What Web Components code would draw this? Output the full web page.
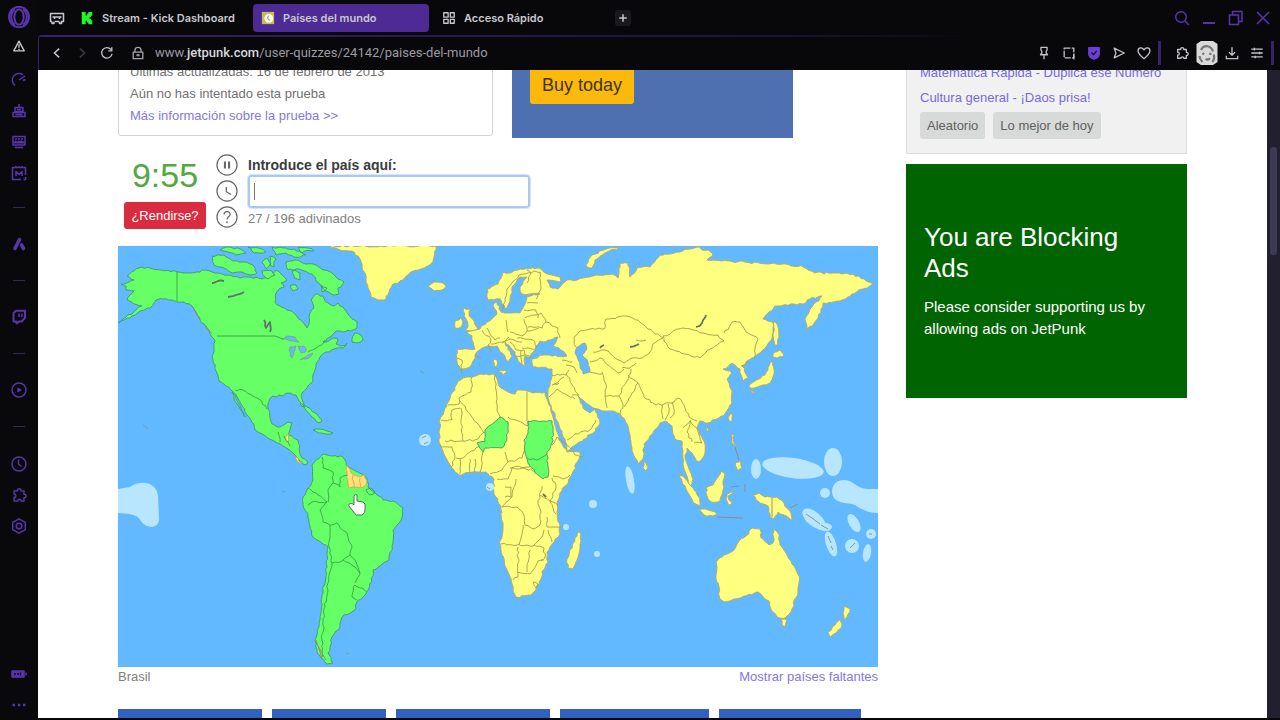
<!DOCTYPE html>
<html lang="es">
<head>
<meta charset="utf-8">
<title>Países del mundo</title>
<style>
body
{
	margin      : 0;
	background  : #08080b;
	font-family : "Liberation Sans", Arial, sans-serif;
}
</style>
</head>
<body>
<gx-window></gx-window>

<script>
const ICONS = {
	opera    : `<ellipse cx="8" cy="8" rx="7.2" ry="7.4"/><ellipse cx="8" cy="8" rx="3.4" ry="5.6"/><path d="M5 2.500C1.500 5 1.500 11 5 13.500M11 2.500c3.500 2.500 3.500 8.500 0 11"/>`,
	warning  : `<path d="M8 2.500L14 13.500H2zM8 6v4M8 11v1.500"/>`,
	speed    : `<path d="M4 13.500A6.500 6.500 0 1 1 12 2.800M8 8l6-4M12 8.500l2.500-1"/>`,
	bot      : `<path d="M8 1v3M4 4.500h8v4H4zM2 9.500h12v4H2zM4.500 11.500h7M6 6.500h4"/>`,
	screen   : `<path d="M2 2.500h12v8.500H2zM4 5h2M7 5h2M10 5h2M4 7.500h1.500M7 7.500h5M4 13.500h8"/><path d="M2.500 8.500h11" stroke-width="2"/>`,
	market   : `<path d="M10 14.500H1.500V2.500h13V10M5 1v2M8 1v2M11 1v2M5 11V6.500L8 9.500l3-3V11M14.500 12v2.500h-2"/>`,
	apps     : `<path d="M4 12.500L8.500 3.500" stroke-width="3.600" stroke-linecap="round"/><path d="M10.500 9l2 3.500" stroke-width="3.600" stroke-linecap="round"/>`,
	twitch   : `<path d="M2.500 4L5 1.800h9V9l-3.500 3.500H8L5.500 14.500v-2H2.500z" stroke-width="2"/><path d="M8 4.500V8M11 4.500V8"/>`,
	player   : `<circle cx="8" cy="8" r="7"/><path d="M7 6.500l2.500 1.500L7 9.500z" fill="currentColor"/>`,
	clock    : `<circle cx="8" cy="8" r="7"/><path d="M7.500 3.800V8l3 2.500"/>`,
	puzzle   : `<path d="M3 4h3.500c-.5-3 4-3 3.500 0h3v3.300c2.800-.3 2.800 3.700 0 3.400V14H10c.3-2.200-3.500-2.200-3.200 0H3v-3.500c2.500 0 2.500-3.500 0-3.500z"/>`,
	settings : `<path d="M8 .8l6.300 3.600v7.200L8 15.200l-6.300-3.600V4.400z"/><circle cx="8" cy="8" r="2.800"/>`,
	battery  : `<path d="M1 5h12v6H1z" fill="currentColor"/><path d="M15 6.500v3"/><path d="M4 7v2M7 7v2M9.500 6.500v3" stroke="#0a0a0c"/>`,
	dots     : `<path d="M1.500 8h2.500M6.800 8h2.500M12 8h2.500" stroke-width="2.500"/>`,
	kick     : `<path d="M2 1h4.500v4H8V3h1.500V1H14v4.500h-1.500V7H11v2h1.500v1.500H14V15H9.500v-2H8v-2H6.500v4H2z" fill="#23f52c" stroke="none"/>`,
	jetpunk  : `<path d="M1 1h14v14H1z" fill="#c8bd55" stroke="none"/><circle cx="9" cy="8.500" r="5" fill="#fff" stroke="none"/><path d="M9 5.500c-2.500 2-1.500 5 1.500 5" stroke="#b8a84a"/>`,
	dial     : `<path d="M2 2h5v5H2zM9.500 2h4.500v5H9.500zM2 9.500h5V14H2zM9.500 9.500H14V14H9.500z"/>`,
	island   : `<path d="M3 11.500H1.500v-8h13v8H12M3 11.500v2h2v-2M10.500 11.500v2h2v-2M6 11.500h4M5.500 7v2M10.500 7v2M3.500 7h9"/>`,
	plus     : `<path d="M8 3v10M3 8h10" stroke-width="2"/>`,
	search   : `<circle cx="7" cy="7" r="5.300"/><path d="M11 11l3.800 4"/>`,
	minimize : `<path d="M2 13h12" stroke-width="2"/>`,
	restore  : `<path d="M1.500 5h9v9.500h-9zM4.500 5V1.500H14v10h-3.500"/>`,
	close    : `<path d="M2 2l12 12M14 2L2 14"/>`,
	back     : `<path d="M10.500 3L5 8l5.500 5" stroke-width="1.800"/>`,
	forward  : `<path d="M5.500 3L11 8l-5.500 5" stroke-width="1.800"/>`,
	reload   : `<path d="M12.500 4A6 6 0 1 0 13.800 9M13.500 1.500v4h-4"/>`,
	lock     : `<path d="M2.500 7h11v7.500h-11zM4.500 7V5a3.500 3.500 0 0 1 7 0v2M8 9v3M6 10.500h4"/>`,
	pin      : `<path d="M4.500 1.500h7v3l-1 1.500v2l1.500 2H4l1.500-2V6l-1-1.500zM8 10v5"/>`,
	snapshot : `<path d="M2.500 2.500h11v11h-11z" stroke-dasharray="7 1.500"/><path d="M13.500 10v5.500"/>`,
	shield   : `<path d="M2 2h12v7c0 3-3 5-6 6-3-1-6-3-6-6z" fill="#6b3fd6" stroke="#6b3fd6"/><path d="M5 7.500l2.500 2.500L11 5.500" stroke="#1b1035"/>`,
	send     : `<path d="M2.500 2.500L14 8 2.500 13.500 4.500 8z"/>`,
	heart    : `<path d="M8 14.500C3 10.500 1.200 8 1.200 5.500c0-4 5-4.500 6.800-1 1.800-3.500 6.800-3 6.800 1 0 2.500-1.800 5-6.800 9z"/>`,
	download : `<path d="M8 1.500V10M4.500 7L8 10.500 11.500 7M1.500 11v3.500h13V11"/>`,
	sliders  : `<path d="M1.500 3.500h13M1.500 8h13M1.500 12.500h13M5 2v3M11 6.500v3M6 11v3"/>`,
	pause    : `<circle cx="8" cy="8" r="7.300"/><path d="M6.500 5.500v5M9.500 5.500v5" stroke-width="1.500"/>`,
	timer    : `<circle cx="8" cy="8" r="7.300"/><path d="M7.500 5v3.500l3.500 2"/>`,
	help     : `<circle cx="8" cy="8" r="7.300"/><path d="M5.800 6.200c.2-3 4.700-2.700 4.500 0C10.200 7.700 8 7.800 8 9.800M8 11v1.500"/>`,
	avatar   : `<path d="M1 2l3-2h8l3 2v12l-3 2H4l-3-2z" fill="#dadada" stroke="none"/><path d="M4 6c2-4 7-3 8 1M5 8l1 1M9.500 8.500h1.500M7 12c1 .5 2 .5 3-.5M3 10c0 2 1 3 2 4M12.500 9c.5 2 0 4-1 5" stroke="#777"/>`
};

class GxIcon extends HTMLElement
{
	constructor ()
	{
		super();
		this.attachShadow ({mode:"open"});
	}

	connectedCallback ()
	{
		this.shadowRoot.innerHTML = `
			<style>
			:host
			{
				display : inline-block;
				flex    : none;
				width   : var(--icon-size, 16px);
				height  : var(--icon-size, 16px);
			}
			svg
			{
				display        : block;
				width          : 100%;
				height         : 100%;
				fill           : none;
				stroke         : currentColor;
				stroke-width   : var(--icon-stroke, 1.5);
				stroke-linejoin: round;
			}
			</style>
			<svg viewBox="0 0 16 16" aria-hidden="true">${ICONS[this.getAttribute("name")]}</svg>
		`;
	}
}

class GxSidebar extends HTMLElement
{
	constructor ()
	{
		super();
		this.attachShadow ({mode:"open"});

		let item = (name, label) =>
			`<button aria-label="${label}"><gx-icon name="${name}"></gx-icon></button>`;

		this.shadowRoot.innerHTML = `
			<style>
			:host
			{
				display        : flex;
				flex-direction : column;
				color          : #5635ad;
				background     : #09090c;
			}
			button
			{
				display         : flex;
				align-items     : center;
				justify-content : center;
				width           : 100%;
				height          : 31px;
				padding         : 0;
				border          : 0;
				color           : inherit;
				background      : none;
			}
			.logo
			{
				height      : 34px;
				--icon-size : 22px;
			}
			.warning
			{
				height        : 24px;
				margin-bottom : 6px;
				color         : #ccc;
				--icon-size   : 14px;
			}
			.solo
			{
				height : 34px;
			}
			hr
			{
				width      : 12px;
				height     : 1px;
				margin     : 19px auto;
				border     : 0;
				background : #342a52;
			}
			.tools
			{
				padding-top : 2px;
			}
			.end
			{
				margin-top : auto;
			}
			</style>
			<button class="logo" aria-label="Opera"><gx-icon name="opera"></gx-icon></button>
			<button class="warning" aria-label="Avisos"><gx-icon name="warning"></gx-icon></button>
			${item("speed", "GX Control")}
			${item("bot", "Aria")}
			${item("screen", "Mods")}
			${item("market", "Mercado")}
			<hr>
			<button class="solo" aria-label="Aplicaciones"><gx-icon name="apps"></gx-icon></button>
			<hr>
			<button class="solo" aria-label="Twitch"><gx-icon name="twitch"></gx-icon></button>
			<hr>
			<button class="solo" aria-label="Reproductor"><gx-icon name="player"></gx-icon></button>
			<hr>
			<div class="tools">
				${item("clock", "Historial")}
				${item("puzzle", "Extensiones")}
				${item("settings", "Ajustes")}
			</div>
			<div class="end">
				${item("battery", "Batería")}
				${item("dots", "Más")}
			</div>
		`;
	}
}

class GxTab extends HTMLElement
{
	constructor ()
	{
		super();
		this.attachShadow ({mode:"open"});
	}

	connectedCallback ()
	{
		this.shadowRoot.innerHTML = `
			<style>
			:host
			{
				display : block;
				flex    : 0 1 176px;
			}
			button
			{
				display       : flex;
				align-items   : center;
				gap           : 8px;
				width         : 100%;
				height        : 28px;
				padding       : 0 8px;
				border        : 0;
				border-radius : 4px;
				color         : inherit;
				background    : none;
				font          : inherit;
				white-space   : nowrap;
				--icon-size   : 14px;
			}
			:host([active]) button
			{
				background : #4d2a94;
			}
			</style>
			<button><gx-icon name="${this.getAttribute("icon")}"></gx-icon><slot></slot></button>
		`;
	}
}

class GxTabbar extends HTMLElement
{
	constructor ()
	{
		super();
		this.attachShadow ({mode:"open"});
		this.shadowRoot.innerHTML = `
			<style>
			:host
			{
				display     : flex;
				align-items : center;
				gap         : 5px;
				height      : 35px;
				color       : #c9c7ce;
				font        : 600 11px/16px Inter, sans-serif;
			}
			button
			{
				display         : flex;
				align-items     : center;
				justify-content : center;
				width           : 16px;
				height          : 16px;
				padding         : 0;
				border          : 0;
				color           : inherit;
				background      : none;
			}
			.island
			{
				width  : 29px;
				margin-left : 4px;
				margin-right : -4px;
			}
			.new
			{
				border-radius : 3px;
				background    : #1a1a1e;
				--icon-size   : 12px;
			}
			.controls
			{
				display     : flex;
				gap         : 11px;
				margin-left : auto;
				padding-right : 9px;
				color       : #5635ad;
			}
			</style>
			<button class="island" aria-label="Espacio"><gx-icon name="island"></gx-icon></button>
			<slot></slot>
			<button class="new" aria-label="Nueva pestaña"><gx-icon name="plus"></gx-icon></button>
			<div class="controls">
				<button aria-label="Buscar"><gx-icon name="search"></gx-icon></button>
				<button aria-label="Minimizar"><gx-icon name="minimize"></gx-icon></button>
				<button aria-label="Restaurar"><gx-icon name="restore"></gx-icon></button>
				<button aria-label="Cerrar"><gx-icon name="close"></gx-icon></button>
			</div>
		`;
	}
}

class GxAddress extends HTMLElement
{
	constructor ()
	{
		super();
		this.attachShadow ({mode:"open"});

		let item = (name, label) =>
			`<button class="${name}" aria-label="${label}"><gx-icon name="${name}"></gx-icon></button>`;

		this.shadowRoot.innerHTML = `
			<style>
			:host
			{
				display     : flex;
				align-items : center;
				height      : 35px;
				box-sizing  : border-box;
				border-left : 1px solid #38216d;
				border-top-left-radius : 4px;
				background  : linear-gradient(90deg, #38216d, #1c1433 60%, transparent 75%) top / 100% 2px no-repeat;
				color       : #c4c2c9;
				font        : 13px/20px Roboto, sans-serif;
			}
			button
			{
				display         : flex;
				align-items     : center;
				justify-content : center;
				width           : 25px;
				height          : 24px;
				padding         : 0;
				border          : 0;
				color           : inherit;
				background      : none;
				--icon-size     : 14px;
			}
			.nav
			{
				display      : flex;
				padding-left : 5px;
			}
			.forward
			{
				color : #3c3b41;
			}
			.lock
			{
				margin-left : 6px;
				color       : #a5a3aa;
			}
			.avatar
			{
				--icon-size : 24px;
			}
			.url
			{
				flex        : 1;
				margin-left : 5px;
				color       : #9c9aa3;
			}
			.url b
			{
				color       : #d8d6dd;
				font-weight : 500;
			}
			.tools
			{
				display      : flex;
				align-items  : center;
				padding-right: 2px;
			}
			.tools i
			{
				width      : 3px;
				height     : 24px;
				background : #38216d;
				margin     : 0 8px 0 2px;
			}
			.tools i:last-child
			{
				margin : 0 4px 0 2px;
			}
			</style>
			<div class="nav">
				${item("back", "Atrás")}
				${item("forward", "Adelante")}
				${item("reload", "Recargar")}
				${item("lock", "Seguridad")}
			</div>
			<span class="url">www.<b>jetpunk.com</b>/user-quizzes/24142/paises-del-mundo</span>
			<div class="tools">
				${item("pin", "Fijar")}
				${item("snapshot", "Captura")}
				${item("shield", "Bloqueador")}
				${item("send", "Flow")}
				${item("heart", "Favoritos")}
				<i></i>
				${item("puzzle", "Extensiones")}
				${item("avatar", "Perfil")}
				${item("download", "Descargas")}
				${item("sliders", "Configuración")}
				<i></i>
			</div>
		`;
	}
}

class QuizInfo extends HTMLElement
{
	constructor ()
	{
		super();
		this.attachShadow ({mode:"open"});
		this.shadowRoot.innerHTML = `
			<style>
			:host
			{
				display : grid;
				grid-template-columns : 375px 281px;
				gap     : 19px;
			}
			section
			{
				align-self    : start;
				padding       : 8px 11px;
				border        : 1px solid #d4d4d4;
				border-radius : 3px;
				color         : #707070;
				font-size     : 13px;
				line-height   : 22px;
			}
			p
			{
				margin : 0;
			}
			a
			{
				color           : #8478e2;
				text-decoration : none;
			}
			aside
			{
				padding    : 14px 18px 34px;
				background : #4e6fb0;
			}
			button
			{
				height        : 38px;
				padding       : 0 12px;
				border        : 0;
				border-radius : 3px;
				color         : #40351c;
				background    : #fdb90b;
				font          : 18px/38px "Liberation Sans", Arial, sans-serif;
			}
			</style>
			<section>
				<p>Últimas actualizadas: 16 de febrero de 2013</p>
				<p>Aún no has intentado esta prueba</p>
				<p><a href="#info">Más información sobre la prueba &gt;&gt;</a></p>
			</section>
			<aside><button>Buy today</button></aside>
		`;
	}
}

class QuizControls extends HTMLElement
{
	constructor ()
	{
		super();
		this.attachShadow ({mode:"open"});
		this.shadowRoot.innerHTML = `
			<style>
			:host
			{
				display   : flex;
				color     : #808080;
				font-size : 13px;
			}
			.clock
			{
				display        : flex;
				flex-direction : column;
				align-items    : center;
				width          : 94px;
			}
			time
			{
				color       : #55a743;
				font-size   : 34px;
				line-height : 40px;
			}
			button
			{
				padding    : 0;
				border     : 0;
				background : none;
				color      : #666;
				font       : inherit;
			}
			.giveup
			{
				height        : 27px;
				margin-top    : 7px;
				padding       : 0 7px;
				border-radius : 3px;
				color         : #fff;
				background    : #d92c40;
			}
			.options
			{
				display        : flex;
				flex-direction : column;
				gap            : 4px;
				margin         : -1px 10px 0 4px;
				--icon-size    : 22px;
				--icon-stroke  : 0.9;
			}
			.options button
			{
				height : 22px;
			}
			.answer
			{
				display        : flex;
				flex-direction : column;
			}
			label
			{
				color       : #3c3c3c;
				font-weight : bold;
				font-size   : 14px;
				line-height : 20px;
			}
			input
			{
				box-sizing    : border-box;
				width         : 282px;
				height        : 33px;
				padding       : 4px 6px;
				border        : 2px solid #a9c9f2;
				border-radius : 3px;
				outline       : 1px solid #d6e6fa;
				background    : linear-gradient(#777, #777) 4px center / 1px 17px no-repeat #fff;
				font          : 16px "Liberation Sans", Arial, sans-serif;
			}
			.count
			{
				line-height : 22px;
			}
			</style>
			<div class="clock">
				<time>9:55</time>
				<button class="giveup">¿Rendirse?</button>
			</div>
			<div class="options">
				<button aria-label="Pausa"><gx-icon name="pause"></gx-icon></button>
				<button aria-label="Tiempo"><gx-icon name="timer"></gx-icon></button>
				<button aria-label="Ayuda"><gx-icon name="help"></gx-icon></button>
			</div>
			<div class="answer">
				<label for="guess">Introduce el país aquí:</label>
				<input id="guess" type="text" autocomplete="off">
				<span class="count">27 / 196 adivinados</span>
			</div>
		`;
	}
}

class QuizMap extends HTMLElement
{
	constructor ()
	{
		super();
		this.attachShadow ({mode:"open"});
		this.shadowRoot.innerHTML = `
			<style>
			:host
			{
				display : block;
			}
			svg
			{
				display    : block;
				width      : 100%;
				background : #63b9ff;
			}
			path    { stroke-linejoin : round; }
			.land   { fill : #ffff80; stroke : #b0a868; stroke-width : 0.9; }
			.found  { fill : #66ff66; stroke : #3f9a6a; stroke-width : 0.9; }
			.guess  { fill : #ffe27a; stroke : #e0a050; stroke-width : 0.9; }
			.sea    { fill : #63b9ff; stroke : #8a9a78; stroke-width : 0.7; }
			.lines  { fill : none; stroke : #a39b4e; stroke-width : 0.9; }
			.green  { fill : none; stroke : #35a545; stroke-width : 0.9; }
			.lake   { fill : none; stroke : #5a7468; stroke-width : 1.8; }
			.zone   { fill : #b9e6ff; }
			.reef   { fill : none; stroke : #7d98a0; stroke-width : 1; }
			</style>
			<svg viewBox="118 246 760 421" role="img" aria-label="Mapa del mundo">
				<g id="terrain">
					<!-- north america -->
					<g class="found">
						<path d="M142 267l19 3 16 2 13 1 15-3 10 3 13 2 12 3 10-1 12 2 10-3 4-6 5 4 6 6-6 3 3 4-5 2-3 4-1 9 5 4 7 4 8 4 6 6 6 8 2-4v-7l5-9-3-8 4-6 8 2 5 7 6 3 4-3 5 4 5 7 9 8v6l-7 3h-14l-6 6-7 5h4l6-4 5 1-2 5 5 2 6-3-4 5-9 1-8 3-6 5-4 7-1 6-2 5v6l-6 7-5 5v6l2 8-3-1-3-7-2-4-6-2-7 3h-10l-4 5-1 8 2 9 2 6 7 3 6-3 3-2 4 1-2 7-1 5L298 440 299 450 302 458 308 462 306 465 299 460 293 453 288 449 280 444 272 440 264 435 255 430 254 424 247 415 241 404 236 395 231 390 226 386 219 381 216 371 213 360 214 348 215 341 212 337 207 329 200 320 196 312 192 306 184 302 177 302 171 300 163 299 156 300 150 308 140 311 132 316 124 320 118 323 126 317 136 310 142 306 134 304 127 300 130 295 134 291 126 290 126 286 121 284 129 282 134 280 127 276 134 271z"/>
						<path d="M212 256l12-1 9 6 10 1 10 3 4 8-7 2-8-3-10 1-8-5-10-3zM220 250l8-3 12 2 6 4-10 2-8-3zM248 247l14 2 4 3-12 1zM262 262l5-4 4 6-5 5zM270 256l6 3-2 8-4-2zM262 271h10l3 4-8 4zM272 247l14 1 14 3 6 4-12 2-8-4-10 2zM286 262l12-2 8 4 10 1 8 5 8 3 6 6 6 3-3 5-3 1 1 6-6 1-7-4-4-5-6-5-4-7-8-3-8-2-8 1zM293 270l7 3v7l-6-2zM290 286l6-1 2 4-5 2zM298 247l10 1 6 3-14 1zM321 285l6 3-5 4z"/>
						<path d="M352 339l3-6 6 2 2 5-5 3-6-1zM302 404l5 3 8 6 7 8-3 2-7-6-7-8zM313 430l7-1 7 2 6 2-7 1-7-1zM232 392l7 12 6 13-5-8-6-10z"/>
					</g>
					<path class="sea" d="M282 339l7-3 6 1 4 5-7-1zM290 347l6-1-2 6-2 6-2-2zM298 346l6 0 3 4-6 3-2-4zM300 360l13-7-6 6z"/>
					<!-- south america -->
					<path class="found" d="M312 465L323 454 332 456 343 457 348 467 358 472 367 478 368 487 377 495 383 500 393 501 403 508 402 518 393 530 393 543 389 560 373 570 372 582 365 595 357 602 355 610 342 617 340 627 332 637 330 647 328 653 333 663 327 664 317 653 315 640 320 620 323 590 327 567 328 547 313 537 308 517 303 505 303 497 308 488 313 480z"/>
					<path class="land" d="M294 457l4 1 4 5-3 0zM286 436l3-2-1 8-3-1z"/>
					<path class="guess" d="M347 466l3 3 4 6 5 2 5-2 3 6-2 5-6 2-6-1-4 1-1-5-2-8z"/>
					<path class="guess" d="M353 475l1 12M360 478l0 10"/>
					<!-- greenland, iceland -->
					<path class="land" d="M330 246l10 4 12 1 8 8 2 8 3 6 1 9 3 8 2 7 7 3 8-1 3-7 3-7 11-5 8-8 10-3 10-5 3-7 2-11zM428 286l6-4 9 1 3 3-4 4-8 1z"/>
					<!-- eurasia -->
					<path class="land" d="M510 273l10-4 18-1 7 5 15 4v5l-13-2 3 7 8 2 9-9h10l16-4 19-2 6 4 2-15h8l2 14 7-9 13-1 10-12 17-3 20-5 16 6-6 7 38 2 22 2h16l20 3 12 6h18l20 1 20 10-6 4-15 6-12 7-17 2-5 15-11 12-2-11 5-10 12-13-12 3-7 5-28 2-12 13 10 4-1 15-12 15-8 5-10 8 6 12-5 3-3-12-8-6-9 6 9 4-5 6 5 12v12l-9 13-15 7-8-2-3 7 8 16-1 12-6 6-6-9-5-5-2 10 4 11 4 10-3 7-4-12-3-10v-13l-1-10-7-2-3-13-7-5-5 2-10 13-6 8-1 15-5 5-6-13-4-25-8-12-7-3h-8l-12-3-15-12 5 12 7 5 5-4 5 14-7 10-26 18-2-12-8-18-7-17-2-6v-7l2-5 2-17-19-2-1-8 11-4 24 1-4-5-10-5 5-9-13 5-5-1-4 5-3 6-3 5-5-1v11l-7-6-3-9-10-10 7 15-4 5-3-6-8-10h-9l-10 5-5 10-3 6-10 2-3-7v-13h18l-3-13-5-4 13-3 7-7 10-8-4-8 4-4 4 10 19 1 5-9 2-7 13-3-18 0-2-7 7-10h-7l-8 10-2 14-5 8-5-10-12 1-1-11 11-5 5-12z"/>
					<path class="land" d="M464 308l6 1-1 7 5 5 2 5 2 3-8 2-5 0 3-4-1-6-3-5zM455 321l6-3 2 4-2 5-6 1zM586 265l6-10 14-6 13-1-12 4-12 8-3 8-5-1zM774 321l4 6 1 10-3 9-3-12zM775 352l5-2 4 5-7 3-4-1zM773 362l1 12-4 9-10 3-10 2 5 4-2 1-4-7 6-5 10-6 3-5 2-8zM731 412l1 5-2 5-2-4zM498 370l9 1-3 4zM494 359l3 1v6l-3 1zM559 383l-5 1zM705 427l4 2-2 3z"/>
					<path class="sea" d="M577 347l8-4 2 6-5 6 6 7 2 10-7 2-3-9-5-12z"/>
					<!-- africa -->
					<path class="land" d="M458 381l9-4h5l8-3 15 1 3 8 3 5 7 4 7 2 2-4 10 1 6 2 12-1 2 7 5 15 4 14 3 12 8 12 13 0-1 7-7 15-10 17-5 11v10l3 14v8l-6 8-7 10 1 10-6 9-1 8-5 10-5 6-15 2-3-6-2-12-6-13-5-22 3-18-2-20-7-12v-15l-8-7h-10l-17 3-8-8-7-13-5-12 1-23 7-15z"/>
					<path class="land" d="M577 536l2-5 2 4-1 12-3 13-4 9-5-1-1-9 3-9zM644 461l3 4-1 6-3-3z"/>
					<!-- south east asia, oceania -->
					<path class="land" d="M678 474l5 2 8 10 8 11 1 9-7-4-7-13zM699 510l7-1 11 5-4 2-9-1zM706 488l7-3 5-8 3-6 4 3-2 7v9l-3 11-9 1-4-6zM727 494l7-2-6 4 4 8-4 1-2-6zM731 434l3 1v8l3 4-5-4zM736 462l5-1 1 7-5 2zM752 495l7-2 6 4 12 0 7 6 5 7 3 10-8-5-6-3-4 7-4-2-2-11-8-3z"/>
					<path class="land" d="M716 562l8-7 9-4 6-10 7-5 6-8 8 1 1 9 8 7 4-2 1-14 4 4 2 12 6 8 6 11 7 12-1 16-7 20-6 6-8-1-6-8-2-8-4-2-7-7-14 4-10 3-10 3-4-3-1-12-3-12zM781 619l6 1-2 7-3-2zM844 606L850 609 847 617 844 620 843 613zM840 619L842 624 836 633 830 637 828 632 835 625z"/>
					<g class="lines">
						<!-- africa -->
						<path d="M495 375l1 15 1 21 3 6M448 405l11-1v-6l12-6 1-15M459 400l25 33 16-13M508 417l20 9 0-5M441 420h11v-10l8-2M461 408l2 33h-18M463 441l12-1 9-8M440 447l12 0 3 10-4 10M456 458l7 0 8-7 10-5M460 474v-15M470 473v-14M475 472v-13M480 472l4-21M505 452l3 10-6 8-12 4M508 462l14-4 4-9 0-11M510 468l22-2M497 479h11l4-11h10l20 4M502 507h15l6 6 2 12 9 4 6-4 1-13-3-8 4-18M501 544l32 2 8-8 3-8M523 525l-4 20M518 547v30l-5 3M518 572l12 2 8-13 6-1M530 550l-3 22M534 545l10 3 1 10-4 3M552 478l4 10-6 14 6 12M552 445l5-8 8 6 10 12 8 2M553 476l10 3 7-4M540 495l18 10M547 517v10l7 0 7 0M548 530l4 12M533 582l5 2-2 4zM505 487h6v10h-6M502 507l10-10 4-18"/>
						<!-- europe -->
						<path d="M503 311l4-22 12-14 15-4 6 2M527 283l4-10-4-3M540 272l1 16-5 11M506 320l2 12M524 319l3 12-5 5-12-4M527 303l11 0M524 310l12 0 2 8M525 318l7-3 9-2 5 9-4 6-14-1M546 322l12 6 2 10M527 331l12-3M487 328l8 12 5-2M482 330l9 10-3 5 3 7M491 344l12-2 6-5M502 343l8-4 12 3M510 342l6 8 8 0 1 5M517 338l16 2 4 8M522 348l14 1M515 356l10-1 6 3M457 358l5 2v14M475 355l6 3M521 351l1 12M562 360l10 2M566 365l8 2 3 6M552 375l14 0 3-5M566 374l7 12 6 10M552 385l12-8M549 397l8-8 10 6 8 4M567 440l8-6 15-4 6-10"/>
						<!-- asia -->
						<path d="M576 347l-2-10 6-6 10-2 14 0 2-10 20-3 12 4 10 9 12 7 3 2-10 6-3 8-8 6-10 0-8 5-12-8-7-5-12 2M663 336l20-8 10 2 10 3 15 2 6 6-14 8-10 9-15-4-15-5-6-8zM724 333l8-11 8 0 6 10 12 7-3 10 0 8M590 362l10-4 8 7 10 8 6-4M622 368l8 0 6-5M602 372l4 12-1 12 14 0 8-15 4-12M605 396l2 12M590 372l12 2M619 396l4 8-3 10M628 375l10 8-6 10-8 14M638 383l6 14 12 8 8-1 10-2 5-4 6 10 4 9 8 4M662 405l1 14M668 404l1 8-4 8M672 402l2 12-4 4M690 421l-3 11 5 10M690 421l8 10 4 12-8 0M683 428l8-8M572 395l6 0M636 340l10 0M741 366l8-4"/>
					</g>
					<path class="green" d="M235 390l8 0 10 6 6 3 8 10M278 432l2 10M284 436l6 10M322 457L323 468 333 472 333 483 340 487 340 478 348 475M333 483L328 490 328 502M308 488L318 495 327 502 312 502 308 505M327 502L320 510 323 522 330 525 329 547M330 525L337 523 347 533 352 547 350 555 343 560 332 563 329 547M343 560L355 567 360 573 355 583M350 555L355 560 360 573M332 563L328 583 325 607 322 640 323 657M355 585L367 592M355 585L352 597 357 600M366 490l4 5 5-3-4-4zM308 352l11-6 6-6"/>
					<path class="lake" d="M212 283l6-2 6 0M228 297l8-2 8-3M264 320l2 8 4-6 0 10M600 348l4-3M630 347l9-3M696 327l6-4 4-8M543 494l3 3"/>
					<g class="found">
						<path d="M485 430L500 417 508 422 507 438 502 448 485 448 483 452 477 443 485 442z"/>
						<path d="M528 421L552 421 553 432 552 443 547 452 548 467 548 477 543 479 535 473 528 463 525 452 524 440 528 433z"/>
					</g>
					<path class="green" d="M527 458L537 460 547 454"/>
				</g>
				<path class="green" d="M177 271v30M217 336h58l8 3"/>
				<path class="lines" d="M527 392v29"/>
				<path class="lines" d="M192 306l8 14M206 326l6 8M318 646l8 14M316 640l6 18M735 447l4 13M717 517l26 1M790 508l8-4M745 484v8M772 498v19M731 487l8-1" stroke="#9c826e" style="stroke:#9c826e"/>
				<!-- island groups -->
				<g class="zone">
					<path d="M118 489l12-2c12-8 26-4 28 8l1 24c0 11-14 9-18 2-4-8-14-7-23-8z"/>
					<circle cx="425" cy="440" r="6"/><circle cx="490" cy="487" r="4"/>
					<ellipse cx="630" cy="480" rx="4" ry="14" transform="rotate(-10 630 480)"/>
					<circle cx="593" cy="504" r="4"/><circle cx="566" cy="527" r="3"/><circle cx="597" cy="554" r="3"/>
					<ellipse cx="756" cy="469" rx="5" ry="10"/>
					<ellipse cx="793" cy="468" rx="31" ry="10" transform="rotate(8 793 468)"/>
					<ellipse cx="833" cy="462" rx="9" ry="14"/><circle cx="825" cy="493" r="5"/>
					<path d="M832 491c1-13 15-14 24-6 7 5 14 4 22 4v24c-9 0-16-3-23-8-7-3-23 0-23-14z"/>
					<ellipse cx="814" cy="519" rx="7" ry="14" transform="rotate(-50 814 519)"/>
					<ellipse cx="825" cy="527" rx="7" ry="4"/>
					<ellipse cx="831" cy="544" rx="5" ry="13" transform="rotate(-18 831 544)"/>
					<ellipse cx="854" cy="523" rx="5" ry="10" transform="rotate(-30 854 523)"/>
					<circle cx="852" cy="546" r="7"/><circle cx="871" cy="534" r="5"/>
					<ellipse cx="867" cy="553" rx="4" ry="9" transform="rotate(10 867 553)"/>
				</g>
				<path class="reef" d="M806 514l6 4M812 518l8 6M821 525l7 4M828 536l3 7M831 546l2 4M850 548l5-5M869 534h3M422 438l4-2M424 444l4-2M143 425l5 4M282 491l3 1M346 653l3 1M420 371l4 2M487 487l3 2"/>
				<!-- hand pointer -->
				<path d="M354 496c1-2 3-2 3 0v5l6 1 2 2v5c0 3-1 5-3 6h-6l-7-9c-1-2 2-4 5-1z" fill="#fff" stroke="#444" stroke-width="0.8"/>
			</svg>
		`;

		for (let path of this.shadowRoot.querySelectorAll("#terrain path")) {
			path.setAttribute("d", this._roughen(path.getAttribute("d")));
		}
	}

	// splits long segments and nudges the new points, so coasts and borders look less straight
	_roughen (d)
	{
		let seed = 7;
		let rand = () => (seed = (seed * 16807) % 2147483647) / 2147483647 - 0.5;
		let toks = d.match(/[a-z]|-?\d+/gi);
		let out  = [];
		let cmd  = "";
		let i = 0, x = 0, y = 0, sx = 0, sy = 0;

		let line = (nx, ny) => {
			let len   = Math.hypot(nx - x, ny - y);
			let parts = Math.max(1, Math.round(len / 3));
			for (let n = 1; n < parts; n++) {
				let px = x + (nx - x) * n / parts + rand() * 2;
				let py = y + (ny - y) * n / parts + rand() * 2;
				out.push("L" + px.toFixed(1) + " " + py.toFixed(1));
			}
			out.push("L" + nx + " " + ny);
			x = nx;
			y = ny;
		};

		while (i < toks.length) {
			if (/[a-z]/i.test(toks[i])) {
				cmd = toks[i++];
			}
			switch (cmd) {
				case "M" : x = sx = +toks[i++]; y = sy = +toks[i++]; out.push("M" + x + " " + y); break;
				case "L" : line(+toks[i++], +toks[i++]); break;
				case "l" : line(x + +toks[i++], y + +toks[i++]); break;
				case "h" : line(x + +toks[i++], y); break;
				case "v" : line(x, y + +toks[i++]); break;
				case "z" : line(sx, sy); out.push("Z"); break;
			}
		}

		return out.join("");
	}
}

class QuizSide extends HTMLElement
{
	constructor ()
	{
		super();
		this.attachShadow ({mode:"open"});
		this.shadowRoot.innerHTML = `
			<style>
			:host
			{
				display : block;
			}
			nav
			{
				padding       : 7px 13px 14px;
				border        : 1px solid #ddd;
				background    : #f1f1f1;
				font-size     : 13px;
				line-height   : 25px;
			}
			a
			{
				display         : block;
				color           : #7668e2;
				text-decoration : none;
				white-space     : nowrap;
			}
			.buttons
			{
				display     : flex;
				gap         : 8px;
				padding-top : 2px;
			}
			button
			{
				height        : 27px;
				padding       : 0 7px;
				border        : 0;
				border-radius : 3px;
				color         : #606060;
				background    : #d8dada;
				font          : 13px "Liberation Sans", Arial, sans-serif;
			}
			section
			{
				box-sizing  : border-box;
				min-height  : 233px;
				margin-top  : 10px;
				padding     : 58px 30px 58px 18px;
				color       : #fff;
				background  : #006400;
				font-size   : 15px;
				line-height : 22px;
			}
			h2
			{
				margin      : 0 0 12px;
				font-size   : 26px;
				font-weight : normal;
				line-height : 31px;
			}
			p
			{
				margin : 0;
			}
			</style>
			<nav>
				<a href="#mates">Matemática Rápida - Duplica ese Número</a>
				<a href="#cultura">Cultura general - ¡Daos prisa!</a>
				<div class="buttons">
					<button>Aleatorio</button>
					<button>Lo mejor de hoy</button>
				</div>
			</nav>
			<section>
				<h2>You are Blocking Ads</h2>
				<p>Please consider supporting us by allowing ads on JetPunk</p>
			</section>
		`;
	}
}

class QuizPage extends HTMLElement
{
	constructor ()
	{
		super();
		this.attachShadow ({mode:"open"});
		this.shadowRoot.innerHTML = `
			<style>
			:host
			{
				display    : flex;
				overflow   : hidden;
				min-height : 0;
				background : #fff;
			}
			main
			{
				display : grid;
				grid-template-columns : minmax(0, 1fr) 281px;
				gap     : 28px;
				flex    : 1;
				align-items : start;
				margin  : -18px 80px 0;
			}
			quiz-controls
			{
				margin : 17px 0 16px;
			}
			.caption
			{
				display         : flex;
				justify-content : space-between;
				color           : #808080;
				font-size       : 13px;
				line-height     : 20px;
			}
			a
			{
				color           : #8478e2;
				text-decoration : none;
			}
			.regions
			{
				display : grid;
				grid-template-columns : 144fr 114fr 153fr 149fr 142fr;
				gap     : 10px;
				margin  : 22px 17px 0 0;
			}
			.regions span
			{
				height     : 30px;
				background : #3162bf;
			}
			.scroll
			{
				width      : 13px;
				background : #211f30;
			}
			.scroll div
			{
				width         : 7px;
				height        : 108px;
				margin        : 77px auto 0;
				border-radius : 3px;
				background    : #3d3a55;
			}
			</style>
			<main>
				<div>
					<quiz-info></quiz-info>
					<quiz-controls></quiz-controls>
					<quiz-map></quiz-map>
					<div class="caption">
						<span>Brasil</span>
						<a href="#faltantes">Mostrar países faltantes</a>
					</div>
					<div class="regions"><span></span><span></span><span></span><span></span><span></span></div>
				</div>
				<quiz-side></quiz-side>
			</main>
			<div class="scroll"><div></div></div>
		`;
	}
}

class GxWindow extends HTMLElement
{
	constructor ()
	{
		super();
		this.attachShadow ({mode:"open"});
		this.shadowRoot.innerHTML = `
			<style>
			:host
			{
				display : grid;
				grid-template-columns : 38px minmax(0, 1fr);
				height  : 100vh;
			}
			.view
			{
				display : grid;
				grid-template-rows : auto auto minmax(0, 1fr);
				min-height : 0;
				padding-bottom : 2px;
			}
			</style>
			<gx-sidebar></gx-sidebar>
			<div class="view">
				<gx-tabbar>
					<gx-tab icon="kick">Stream - Kick Dashboard</gx-tab>
					<gx-tab icon="jetpunk" active>Países del mundo</gx-tab>
					<gx-tab icon="dial">Acceso Rápido</gx-tab>
				</gx-tabbar>
				<gx-address></gx-address>
				<quiz-page></quiz-page>
			</div>
		`;
	}
}

customElements.define("gx-icon", GxIcon);
customElements.define("gx-sidebar", GxSidebar);
customElements.define("gx-tab", GxTab);
customElements.define("gx-tabbar", GxTabbar);
customElements.define("gx-address", GxAddress);
customElements.define("quiz-info", QuizInfo);
customElements.define("quiz-controls", QuizControls);
customElements.define("quiz-map", QuizMap);
customElements.define("quiz-side", QuizSide);
customElements.define("quiz-page", QuizPage);
customElements.define("gx-window", GxWindow);
</script>
</body>
</html>
